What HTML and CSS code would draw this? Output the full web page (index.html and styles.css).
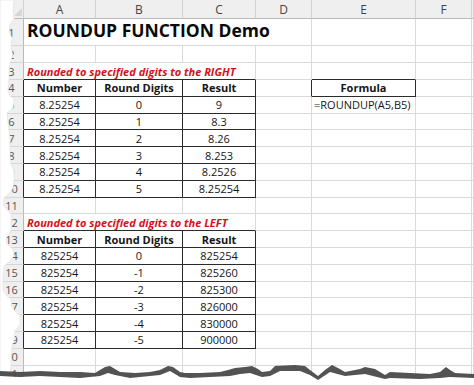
FILE: index.html
```html
<!DOCTYPE html>
<html>
<head>
<meta charset="utf-8">
<link rel="stylesheet" href="styles.css">
</head>
<body>
<div class="sheet">
  <!-- column headers -->
  <div class="cell colh corner"><svg class="corner-tri" width="8" height="8" viewBox="0 0 8 8"><polygon points="8,0 8,8 0,8" fill="#d6d6d6"/></svg></div>
  <div class="cell colh">A</div><div class="cell colh">B</div><div class="cell colh">C</div><div class="cell colh">D</div><div class="cell colh">E</div><div class="cell colh">F</div><div class="cell colh"></div>

  <!-- row 1 -->
  <div class="cell rowh">1</div>
  <div class="cell title span4">ROUNDUP FUNCTION Demo</div>
  <div class="cell"></div><div class="cell"></div><div class="cell"></div>

  <!-- row 2 -->
  <div class="cell rowh">2</div>
  <div class="cell"></div><div class="cell"></div><div class="cell"></div><div class="cell"></div><div class="cell"></div><div class="cell"></div><div class="cell"></div>

  <!-- row 3 -->
  <div class="cell rowh">3</div>
  <div class="cell note span3 above">Rounded to specified digits to the RIGHT</div>
  <div class="cell"></div><div class="cell above"></div><div class="cell"></div><div class="cell"></div>

  <!-- row 4 -->
  <div class="cell rowh leftof">4</div>
  <div class="cell tb th">Number</div><div class="cell tb th">Round Digits</div><div class="cell tb th">Result</div>
  <div class="cell leftof"></div><div class="cell tb th">Formula</div><div class="cell"></div><div class="cell"></div>

  <!-- rows 5-10 -->
  <div class="cell rowh leftof">5</div>
  <div class="cell tb">8.25254</div><div class="cell tb">0</div><div class="cell tb">9</div>
  <div class="cell"></div><div class="cell formula">=ROUNDUP(A5,B5)</div><div class="cell"></div><div class="cell"></div>

  <div class="cell rowh leftof">6</div>
  <div class="cell tb">8.25254</div><div class="cell tb">1</div><div class="cell tb">8.3</div>
  <div class="cell"></div><div class="cell"></div><div class="cell"></div><div class="cell"></div>

  <div class="cell rowh leftof">7</div>
  <div class="cell tb">8.25254</div><div class="cell tb">2</div><div class="cell tb">8.26</div>
  <div class="cell"></div><div class="cell"></div><div class="cell"></div><div class="cell"></div>

  <div class="cell rowh leftof">8</div>
  <div class="cell tb">8.25254</div><div class="cell tb">3</div><div class="cell tb">8.253</div>
  <div class="cell"></div><div class="cell"></div><div class="cell"></div><div class="cell"></div>

  <div class="cell rowh leftof">9</div>
  <div class="cell tb">8.25254</div><div class="cell tb">4</div><div class="cell tb">8.2526</div>
  <div class="cell"></div><div class="cell"></div><div class="cell"></div><div class="cell"></div>

  <div class="cell rowh leftof">10</div>
  <div class="cell tb">8.25254</div><div class="cell tb">5</div><div class="cell tb">8.25254</div>
  <div class="cell"></div><div class="cell"></div><div class="cell"></div><div class="cell"></div>

  <!-- row 11 -->
  <div class="cell rowh">11</div>
  <div class="cell"></div><div class="cell"></div><div class="cell"></div><div class="cell"></div><div class="cell"></div><div class="cell"></div><div class="cell"></div>

  <!-- row 12 -->
  <div class="cell rowh">12</div>
  <div class="cell note span3 above">Rounded to specified digits to the LEFT</div>
  <div class="cell"></div><div class="cell"></div><div class="cell"></div><div class="cell"></div>

  <!-- row 13 -->
  <div class="cell rowh leftof">13</div>
  <div class="cell tb th">Number</div><div class="cell tb th">Round Digits</div><div class="cell tb th">Result</div>
  <div class="cell"></div><div class="cell"></div><div class="cell"></div><div class="cell"></div>

  <!-- rows 14-19 -->
  <div class="cell rowh leftof">14</div>
  <div class="cell tb">825254</div><div class="cell tb">0</div><div class="cell tb">825254</div>
  <div class="cell"></div><div class="cell"></div><div class="cell"></div><div class="cell"></div>

  <div class="cell rowh leftof">15</div>
  <div class="cell tb">825254</div><div class="cell tb">-1</div><div class="cell tb">825260</div>
  <div class="cell"></div><div class="cell"></div><div class="cell"></div><div class="cell"></div>

  <div class="cell rowh leftof">16</div>
  <div class="cell tb">825254</div><div class="cell tb">-2</div><div class="cell tb">825300</div>
  <div class="cell"></div><div class="cell"></div><div class="cell"></div><div class="cell"></div>

  <div class="cell rowh leftof">17</div>
  <div class="cell tb">825254</div><div class="cell tb">-3</div><div class="cell tb">826000</div>
  <div class="cell"></div><div class="cell"></div><div class="cell"></div><div class="cell"></div>

  <div class="cell rowh leftof">18</div>
  <div class="cell tb">825254</div><div class="cell tb">-4</div><div class="cell tb">830000</div>
  <div class="cell"></div><div class="cell"></div><div class="cell"></div><div class="cell"></div>

  <div class="cell rowh leftof">19</div>
  <div class="cell tb">825254</div><div class="cell tb">-5</div><div class="cell tb">900000</div>
  <div class="cell"></div><div class="cell"></div><div class="cell"></div><div class="cell"></div>

  <!-- row 20 -->
  <div class="cell rowh">20</div>
  <div class="cell"></div><div class="cell"></div><div class="cell"></div><div class="cell"></div><div class="cell"></div><div class="cell"></div><div class="cell"></div>

  <!-- row 21 -->
  <div class="cell rowh">21</div>
  <div class="cell"></div><div class="cell"></div><div class="cell"></div><div class="cell"></div><div class="cell"></div><div class="cell"></div><div class="cell"></div>

  <!-- remainder -->
  <div class="cell rowh"></div>
  <div class="cell"></div><div class="cell"></div><div class="cell"></div><div class="cell"></div><div class="cell"></div><div class="cell"></div><div class="cell"></div>
</div>

<svg class="tear-left" width="24" height="385" viewBox="0 0 24 385">
  <polygon fill="#ffffff" stroke="#e4e4e4" stroke-width="0.8" points="0,0 14,0 13,12 14,19 10,24 9,32 12,38 11,46 12.5,55 10,63 9,72 9,80 8,90 10,96 14,99 13,108 7,113 8,122 9,130 10,140 10,147 10,156 11,164 14,170 14,180 13,188 9,194 4,198 3,205 7,210 11,214 11,222 11,231 6,238 7,244 13,249 14,256 9,262 4,266 3,275 3,282 3,290 6,295 11,299 11,306 16,312 20,316 20,325 15,331 14,340 12,346 11,357 11,365 10,375 11,385 0,385"/>
</svg>

<svg class="tear-bottom" width="474" height="28" viewBox="0 357 474 28">
  <polygon fill="#ffffff" points="0,376 20,377 40,376 80,378 100,376 108,373 115,375 130,378 160,375 170,371 180,377 190,378 230,376 240,374 250,373 262,377 270,376 280,371 300,371 310,375 318,380 330,372 345,376 365,374 385,379 390,378 420,379 440,378 450,377 474,378 474,385 0,385"/>
  <polygon fill="#444444" opacity="0.92" points="0,371 20,372 40,371 60,372 80,372 95,373 100,370 105,367 110,366 115,369 120,372 135,373 150,372 160,370 168,366 173,367 180,372 185,373 200,373 220,372 228,370 235,368 245,367 252,366 258,369 262,372 270,371 275,366 295,365 305,366 310,370 318,376 325,370 332,365 338,368 345,372 360,369 365,367 375,369 380,372 385,375 390,372 410,373 430,374 440,372 446,367 450,370 455,373 474,374 474,378 450,377 440,378 420,379 390,378 385,379 365,374 345,376 330,372 318,380 310,375 300,371 280,371 270,376 262,377 250,373 240,374 230,376 190,378 180,377 170,371 160,375 130,378 115,375 108,373 100,376 80,378 40,376 20,377 0,376"/>
</svg>
</body>
</html>
```

FILE: styles.css
```css
html, body {
  margin: 0;
  padding: 0;
  background: #ffffff;
}

body {
  width: 474px;
  height: 385px;
  overflow: hidden;
  position: relative;
  font-family: "Open Sans", "Liberation Sans", sans-serif;
}

.sheet {
  display: grid;
  grid-template-columns: 24px 72px 87px 73px 56px 104px 56px 2px;
  grid-template-rows: 19px 27.4px repeat(20, 16.8px) 1fr;
  width: 474px;
  height: 385px;
}

.cell {
  box-sizing: border-box;
  border-right: 1px solid #dadada;
  border-bottom: 1px solid #dadada;
  display: flex;
  align-items: center;
  justify-content: center;
  font-size: 11px;
  color: #161616;
  white-space: nowrap;
  overflow: visible;
  min-width: 0;
}

.colh {
  background: #efefef;
  border-right-color: #d2d2d2;
  border-bottom-color: #b9b9b9;
  color: #444444;
  font-size: 12px;
}

.corner {
  align-items: flex-end;
  justify-content: flex-end;
  padding: 0 1px 2px 0;
}

.rowh {
  background: #efefef;
  border-right-color: #b9b9b9;
  border-bottom-color: #d6d6d6;
  color: #555555;
  font-size: 11px;
}

.span4 { grid-column: span 4; }
.span3 { grid-column: span 3; }

.title {
  justify-content: flex-start;
  align-items: flex-end;
  padding: 0 0 3px 3px;
  font-size: 17.5px;
  font-weight: 700;
  color: #0a0a0a;
}

.note {
  justify-content: flex-start;
  padding-left: 3px;
  font-weight: 700;
  font-style: italic;
  color: #d3121c;
}

.tb {
  border-right-color: #2b2b2b;
  border-bottom-color: #2b2b2b;
}

.th {
  font-weight: 700;
}

.above {
  border-bottom-color: #2b2b2b;
}

.leftof {
  border-right-color: #2b2b2b;
}

.formula {
  justify-content: flex-start;
  padding-left: 2px;
}

.tear-left {
  position: absolute;
  left: 0;
  top: 0;
}

.tear-bottom {
  position: absolute;
  left: 0;
  bottom: 0;
}
```
